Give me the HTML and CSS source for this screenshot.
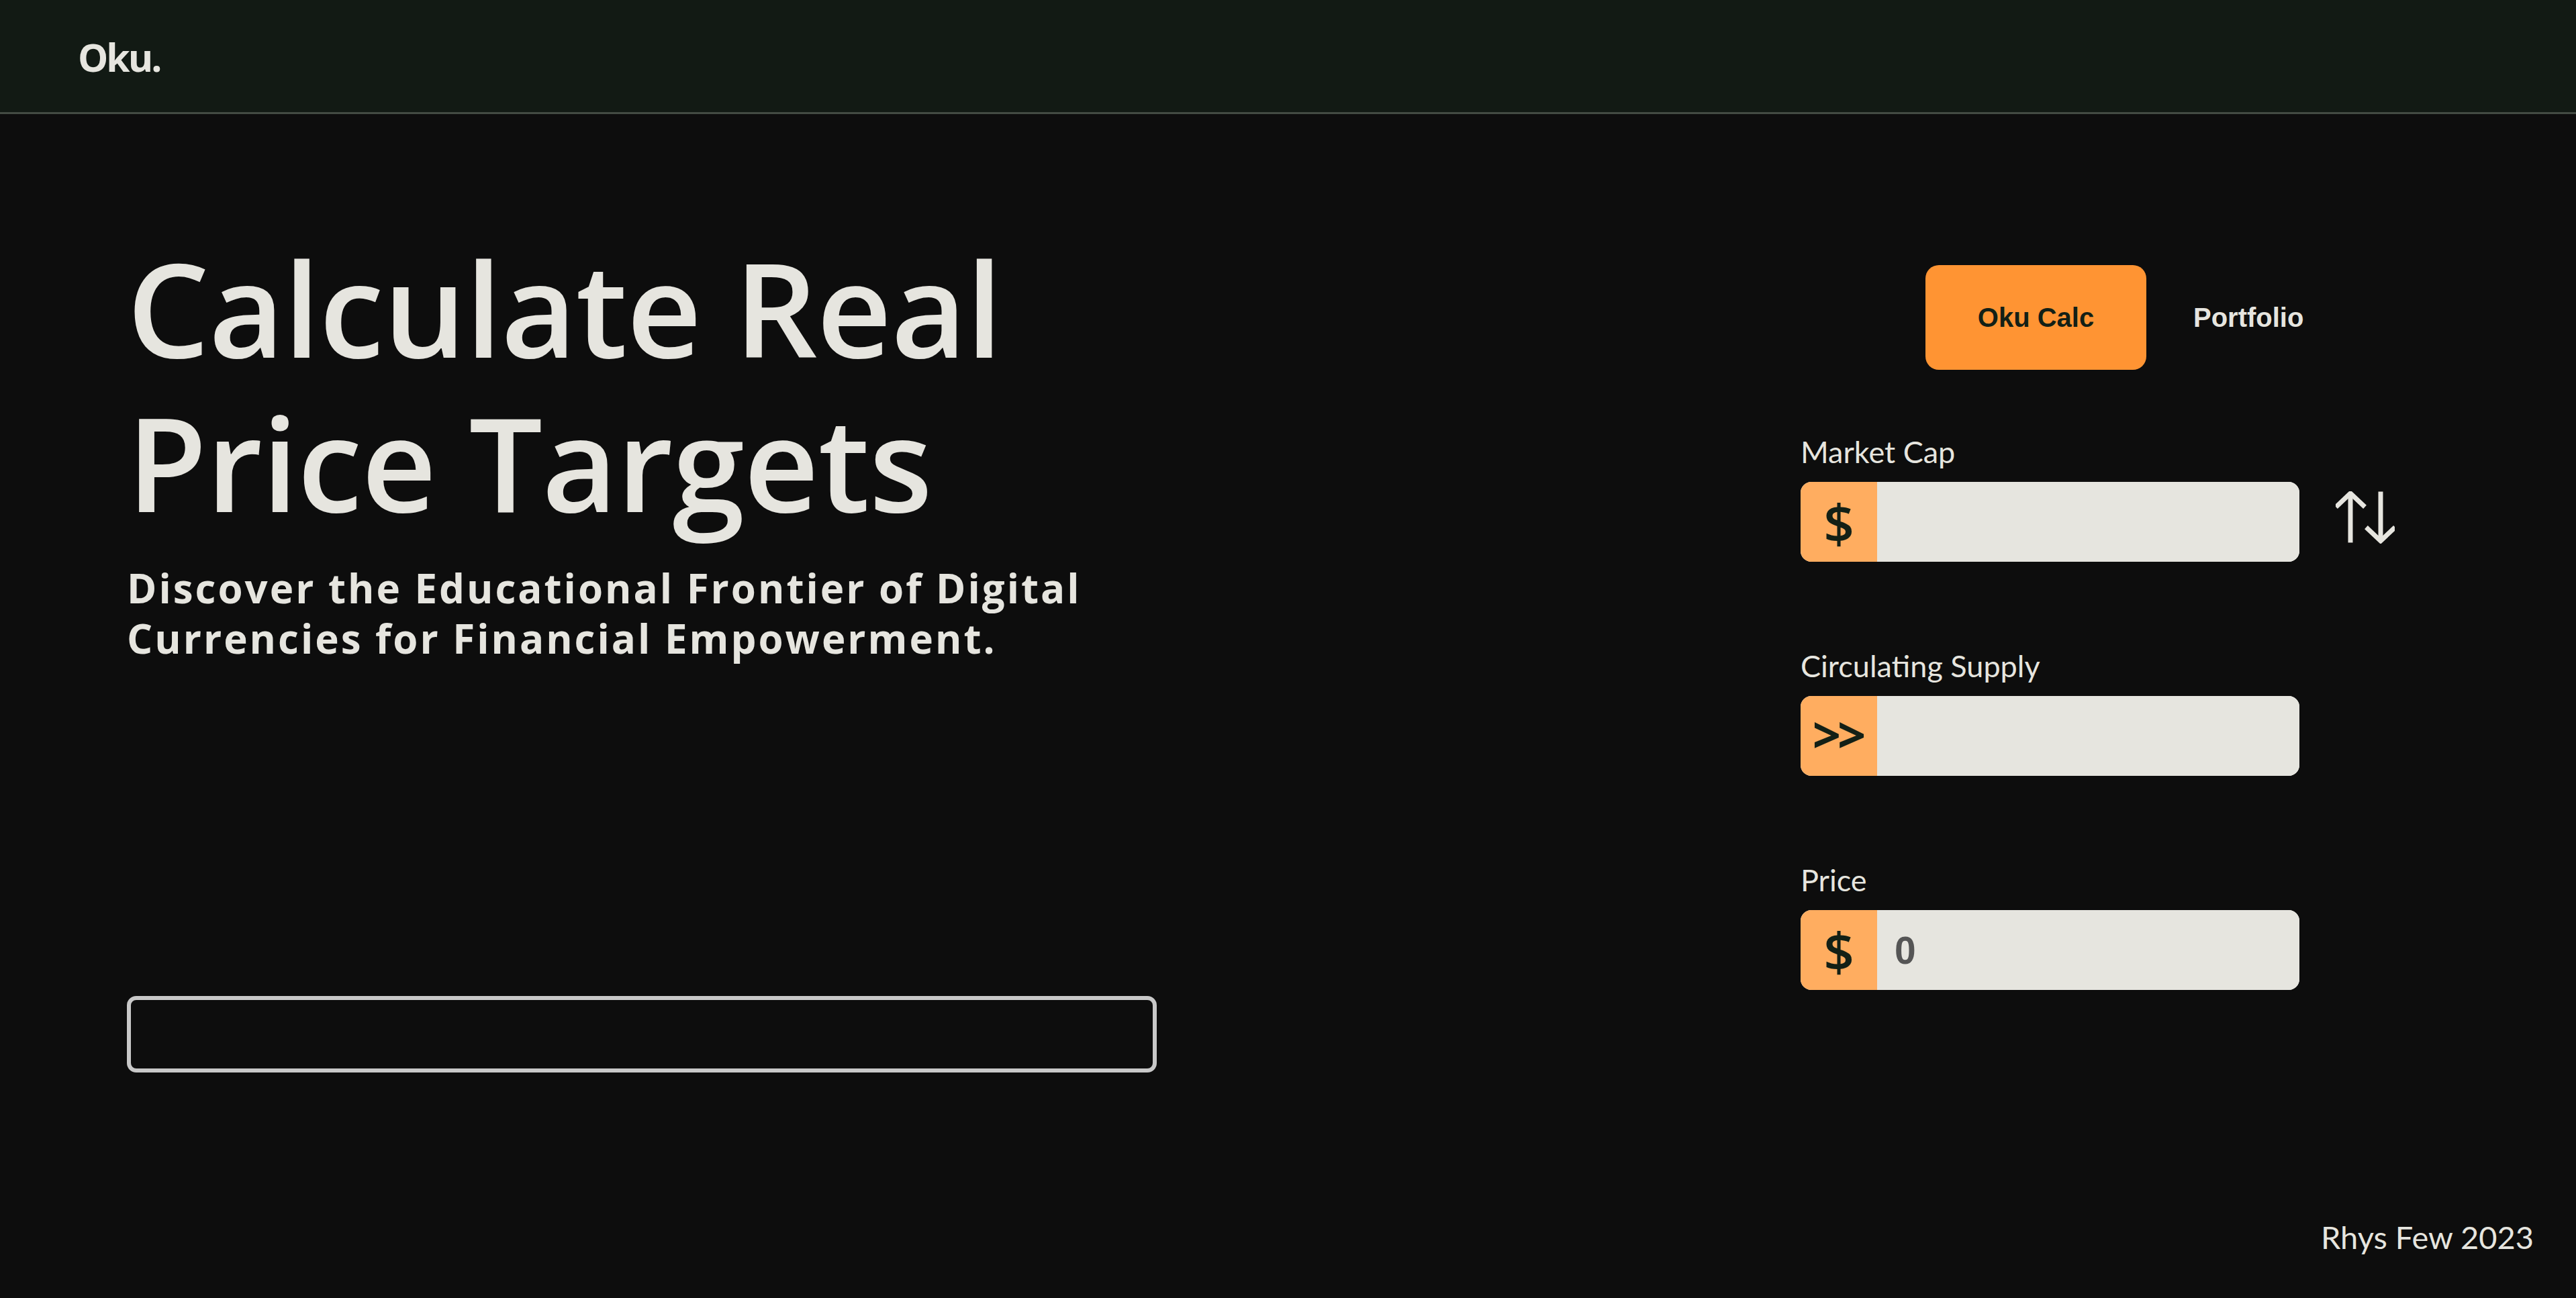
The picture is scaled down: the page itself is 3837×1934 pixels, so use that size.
FILE: index.html
```html
<!DOCTYPE html>
<html lang="en">
<head>
<meta charset="utf-8">
<title>Oku.</title>
<link rel="stylesheet" href="styles.css">
</head>
<body>
<header class="topbar">
  <div class="logo">Oku.</div>
</header>
<main class="main">
  <section class="hero">
    <h1 class="hero-title"><span class="hero-line">Calculate Real</span><span class="hero-line">Price Targets</span></h1>
    <p class="hero-sub">Discover the Educational Frontier of Digital<br>Currencies for Financial Empowerment.</p>
    <div class="result-box"></div>
  </section>
  <section class="calc">
    <nav class="tabs">
      <button class="tab tab-active">Oku Calc</button>
      <button class="tab tab-plain">Portfolio</button>
    </nav>
    <div class="field field-first">
      <label class="field-label">Market Cap</label>
      <div class="field-row">
        <div class="input-group">
          <span class="prefix prefix-dollar">$</span>
          <input class="input" type="text">
        </div>
        <button class="swap" aria-label="swap">
          <svg width="88" height="78" viewBox="0 0 88 78" fill="none" stroke="#e6e5df" stroke-width="7" stroke-linecap="square" stroke-linejoin="miter">
            <line x1="22" y1="8" x2="22" y2="73"/>
            <polyline points="3,21 22,3 41,21"/>
            <line x1="67" y1="4" x2="67" y2="70"/>
            <polyline points="48,56 67,74 86,56"/>
          </svg>
        </button>
      </div>
    </div>
    <div class="field">
      <label class="field-label">Circulating Supply</label>
      <div class="field-row">
        <div class="input-group">
          <span class="prefix prefix-chev">&gt;&gt;</span>
          <input class="input" type="text">
        </div>
      </div>
    </div>
    <div class="field field-last">
      <label class="field-label">Price</label>
      <div class="field-row">
        <div class="input-group">
          <span class="prefix prefix-dollar">$</span>
          <input class="input" type="text" value="0">
        </div>
      </div>
    </div>
  </section>
</main>
<footer class="footer">Rhys Few 2023</footer>
</body>
</html>
```
FILE: styles.css
```css
* { box-sizing: border-box; }

html, body {
  margin: 0;
  padding: 0;
}

body {
  background: #0d0d0d;
  color: #e6e5df;
  font-family: "Open Sans", "Noto Sans", sans-serif;
  min-height: 100vh;
  display: flex;
  flex-direction: column;
}

.topbar {
  height: 170px;
  background: #121a14;
  border-bottom: 3px solid #434b43;
  display: flex;
  align-items: center;
  padding-left: 116px;
}

.logo {
  font-family: "Open Sans", sans-serif;
  font-weight: 700;
  font-size: 57px;
  letter-spacing: -3px;
  color: #e6e5df;
  padding-top: 2px;
}

.main {
  flex: 1;
  display: flex;
  justify-content: space-between;
  align-items: flex-start;
}

.hero {
  margin-left: 189px;
  width: 1534px;
  padding-top: 173px;
  display: flex;
  flex-direction: column;
}

.hero-title {
  margin: 0;
  font-family: "Open Sans", sans-serif;
  font-weight: 600;
  font-size: 194px;
  line-height: 230px;
  letter-spacing: -1px;
  color: #e6e5df;
}

.hero-line {
  display: block;
  height: 230px;
}

.hero-sub {
  margin: 36px 0 0;
  font-family: "Open Sans", sans-serif;
  font-weight: 700;
  font-size: 60px;
  line-height: 75px;
  letter-spacing: 3px;
  color: #e6e5df;
}

.result-box {
  margin-top: 495px;
  height: 114px;
  width: 1534px;
  border: 6px solid #c8c8c8;
  border-radius: 14px;
}

.calc {
  width: 885px;
  margin-right: 270px;
  padding-top: 225px;
  display: flex;
  flex-direction: column;
}

.tabs {
  display: flex;
  margin-left: 186px;
}

.tab {
  height: 156px;
  border: none;
  background: transparent;
  font-family: "Liberation Sans", Arial, sans-serif;
  font-weight: 700;
  font-size: 40px;
  white-space: nowrap;
  color: #e6e5df;
  padding: 0 70px;
  border-radius: 20px;
  cursor: pointer;
}

.tab-active {
  background: #ff9433;
  color: #132016;
  width: 329px;
  padding: 0;
}

.field {
  margin-top: 128px;
  display: flex;
  flex-direction: column;
}

.field-first {
  margin-top: 95px;
}

.field-label {
  font-family: "Lato", sans-serif;
  font-size: 45px;
  line-height: 54px;
  color: #e6e5df;
}

.field-row {
  margin-top: 18px;
  display: flex;
  align-items: center;
}

.input-group {
  width: 743px;
  height: 119px;
  display: flex;
  border-radius: 16px;
  overflow: hidden;
  background: #e6e5df;
}

.prefix {
  width: 114px;
  flex: none;
  background: #ffad60;
  color: #132016;
  display: flex;
  align-items: center;
  justify-content: center;
  font-family: "Open Sans", sans-serif;
}

.prefix-dollar {
  font-size: 80px;
  font-weight: 600;
}

.prefix-chev {
  font-size: 74px;
  font-weight: 700;
  letter-spacing: -5px;
  padding: 0 4px 6px 0;
}

.input {
  flex: 1;
  min-width: 0;
  border: none;
  outline: none;
  background: #e6e5df;
  padding: 0 0 0 26px;
  font-family: "Liberation Sans", Arial, sans-serif;
  font-weight: 700;
  font-size: 57px;
  color: #555555;
}

.swap {
  margin-left: 54px;
  padding: 0;
  border: none;
  background: transparent;
  display: flex;
  margin-top: -14px;
}

.footer {
  display: flex;
  justify-content: flex-end;
  padding: 0 63px 63px 0;
  font-family: "Lato", sans-serif;
  font-size: 47px;
  line-height: 55px;
  color: #e6e5df;
}
```
